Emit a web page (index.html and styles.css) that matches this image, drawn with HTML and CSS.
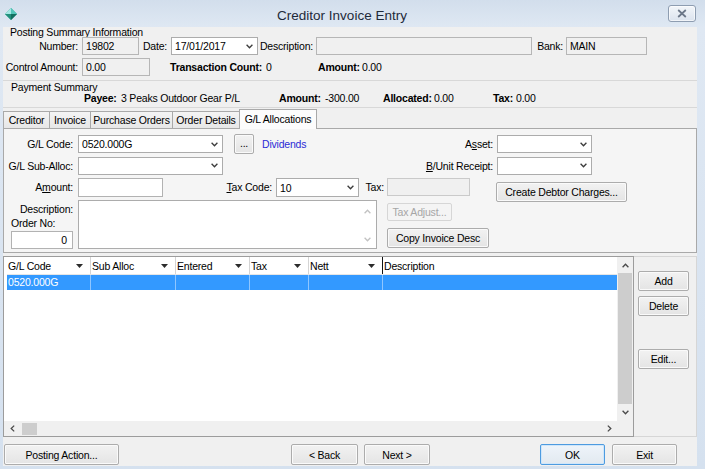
FILE: index.html
```html
<!DOCTYPE html>
<html>
<head>
<meta charset="utf-8">
<title>Creditor Invoice Entry</title>
<link rel="stylesheet" href="styles.css">
</head>
<body>
<svg class="defs" xmlns="http://www.w3.org/2000/svg">
  <symbol id="chev-down" viewBox="0 0 7 5"><path d="M0.6 0.8 L3.5 3.8 L6.4 0.8" fill="none" stroke="currentColor" stroke-width="1.3"/></symbol>
  <symbol id="chev-up" viewBox="0 0 7 5"><path d="M0.6 4.2 L3.5 1.2 L6.4 4.2" fill="none" stroke="currentColor" stroke-width="1.3"/></symbol>
  <symbol id="chev-left" viewBox="0 0 5 7"><path d="M4.2 0.6 L1.2 3.5 L4.2 6.4" fill="none" stroke="currentColor" stroke-width="1.3"/></symbol>
  <symbol id="chev-right" viewBox="0 0 5 7"><path d="M0.8 0.6 L3.8 3.5 L0.8 6.4" fill="none" stroke="currentColor" stroke-width="1.3"/></symbol>
  <symbol id="tri" viewBox="0 0 7 4"><polygon points="0,0 7,0 3.5,4" fill="currentColor"/></symbol>
</svg>
<div class="window">
  <div class="titlebar">
    <svg class="app-icon" viewBox="0 0 12 12">
      <polygon points="6,0 12,6 6,12 0,6" fill="#2aa58f"/>
      <polygon points="6,0 0,6 6,6" fill="#a6e8e4"/>
      <polygon points="6,0 12,6 6,6" fill="#52c6b9"/>
      <polygon points="0,6 6,12 6,6" fill="#23917d"/>
      <polygon points="12,6 6,12 6,6" fill="#137060"/>
    </svg>
    <div class="title">Creditor Invoice Entry</div>
    <div class="close-btn">
      <svg width="10" height="9" viewBox="0 0 10 9"><path d="M1.2 1 L8.8 8 M8.8 1 L1.2 8" stroke="#6b7788" stroke-width="1.7"/></svg>
    </div>
  </div>
  <div class="frame">
    <div class="client">
      <div class="posting">
        <div class="group-title">Posting Summary Information</div>
        <div class="row">
          <span class="lbl l-number">Number:</span>
          <span class="field ro f-number">19802</span>
          <span class="lbl l-date">Date:</span>
          <span class="combo f-date">17/01/2017<svg class="chev"><use href="#chev-down"/></svg></span>
          <span class="lbl l-desc">Description:</span>
          <span class="field ro f-desc"></span>
          <span class="lbl l-bank">Bank:</span>
          <span class="field ro f-bank">MAIN</span>
        </div>
        <div class="row row2">
          <span class="lbl l-number">Control Amount:</span>
          <span class="field ro f-control">0.00</span>
          <span class="b s-txcount">Transaction Count:</span>
          <span class="s-txval">0</span>
          <span class="b s-amt">Amount:</span>
          <span class="s-amtval">0.00</span>
        </div>
      </div>
      <div class="payment">
        <div class="group-title">Payment Summary</div>
        <div class="payrow">
          <span class="b p-payee">Payee:</span>
          <span class="p-payeeval">3 Peaks Outdoor Gear P/L</span>
          <span class="b p-amt">Amount:</span>
          <span class="p-amtval">-300.00</span>
          <span class="b p-alloc">Allocated:</span>
          <span class="p-allocval">0.00</span>
          <span class="b p-tax">Tax:</span>
          <span class="p-taxval">0.00</span>
        </div>
      </div>
      <div class="tabs">
        <div class="tab t-creditor">Creditor</div>
        <div class="tab t-invoice">Invoice</div>
        <div class="tab t-po">Purchase Orders</div>
        <div class="tab t-od">Order Details</div>
        <div class="tab tab-active t-gl">G/L Allocations</div>
      </div>
      <div class="panel">
        <div class="prow prA">
          <span class="plbl">G/L Code:</span>
          <span class="combo w145">0520.000G<svg class="chev"><use href="#chev-down"/></svg></span>
          <span class="btn btn-dots">...</span>
          <span class="dividends">Dividends</span>
          <span class="lbl l-asset">A<u>s</u>set:</span>
          <span class="combo w95"><svg class="chev"><use href="#chev-down"/></svg></span>
        </div>
        <div class="prow prB">
          <span class="plbl">G/L Sub-Alloc:</span>
          <span class="combo w145"><svg class="chev"><use href="#chev-down"/></svg></span>
          <span class="lbl l-bunit"><u>B</u>/Unit Receipt:</span>
          <span class="combo w95"><svg class="chev"><use href="#chev-down"/></svg></span>
        </div>
        <div class="prow prC">
          <span class="plbl tall">A<u>m</u>ount:</span>
          <span class="field f-amount"></span>
          <span class="lbl tall l-taxcode"><u>T</u>ax Code:</span>
          <span class="combo f-taxcode">10<svg class="chev"><use href="#chev-down"/></svg></span>
          <span class="lbl tall l-tax">Tax:</span>
          <span class="field dis f-tax"></span>
          <span class="btn btn-debtor">Create Debtor Charges...</span>
        </div>
        <div class="prow prD">
          <div class="dcol">
            <div class="desc-lbl">Description:</div>
            <div class="ord-lbl">Order No:</div>
            <div class="field ord-input">0</div>
          </div>
          <div class="textarea">
            <div class="tscroll">
              <svg class="tchev"><use href="#chev-up"/></svg>
              <svg class="tchev"><use href="#chev-down"/></svg>
            </div>
          </div>
          <div class="bcol">
            <span class="btn disabled btn-taxadj">Tax Adjust...</span>
            <span class="btn btn-copy">Copy Invoice Desc</span>
          </div>
        </div>
      </div>
      <div class="gridwrap">
        <div class="grid">
          <div class="gtable">
            <div class="ghead">
              <div class="gh c1"><span>G/L Code</span><svg class="tri"><use href="#tri"/></svg></div>
              <div class="gh c2"><span>Sub Alloc</span><svg class="tri"><use href="#tri"/></svg></div>
              <div class="gh c3"><span>Entered</span><svg class="tri"><use href="#tri"/></svg></div>
              <div class="gh c4"><span>Tax</span><svg class="tri"><use href="#tri"/></svg></div>
              <div class="gh c5 last-sep"><span>Nett</span><svg class="tri"><use href="#tri"/></svg></div>
              <div class="gh c6"><span>Description</span></div>
            </div>
            <div class="grow">
              <div class="gc c1">0520.000G</div>
              <div class="gc c2"></div>
              <div class="gc c3"></div>
              <div class="gc c4"></div>
              <div class="gc c5"></div>
              <div class="gc c6"></div>
            </div>
          </div>
          <div class="vscroll">
            <div class="sb-btn sb-up"><svg class="schev"><use href="#chev-up"/></svg></div>
            <div class="vthumb"></div>
            <div class="sb-btn sb-down"><svg class="schev"><use href="#chev-down"/></svg></div>
          </div>
          <div class="hscroll">
            <div class="hb-btn"><svg class="hchev"><use href="#chev-left"/></svg></div>
            <div class="hthumb"></div>
            <div class="hb-btn hb-right"><svg class="hchev"><use href="#chev-right"/></svg></div>
          </div>
          <div class="corner"></div>
        </div>
        <div class="side">
          <span class="btn sbtn b-add">Add</span>
          <span class="btn sbtn b-del">Delete</span>
          <span class="btn sbtn b-edit">Edit...</span>
        </div>
      </div>
      <div class="bottom">
        <span class="btn bb b-post">Posting Action...</span>
        <span class="btn bb b-back">&lt; Back</span>
        <span class="btn bb b-next">Next &gt;</span>
        <span class="btn bb b-ok">OK</span>
        <span class="btn bb b-exit">Exit</span>
      </div>
    </div>
  </div>
</div>
</body>
</html>
```
FILE: styles.css
```css
* { box-sizing: border-box; margin: 0; padding: 0; }
html, body { width: 705px; height: 469px; overflow: hidden; }
body {
  font-family: "Liberation Sans", Arial, sans-serif;
  font-size: 10.5px;
  letter-spacing: -0.2px;
  color: #000;
  background: #d9e4f1;
}
.defs { position: absolute; width: 0; height: 0; overflow: hidden; }
.b { font-weight: bold; }

.window {
  width: 705px; height: 469px;
  display: flex; flex-direction: column;
  background: linear-gradient(180deg, #d2deec 0, #dfe8f3 27px, #d5e1ef 100%);
}
.titlebar { height: 27px; flex: none; display: flex; align-items: center; }
.app-icon { width: 12px; height: 12px; margin: 1px 5px 0 5px; flex: none; }
.title {
  flex: 1; text-align: center; font-size: 13.5px; letter-spacing: 0;
  color: #1e2a3a; padding-top: 3px;
}
.close-btn {
  width: 28px; height: 17px; margin: 0 9px 0 6px; flex: none;
  border: 1px solid #8e9db1; border-radius: 3px;
  background: linear-gradient(180deg, #f3f6fa, #dbe3ee);
  display: flex; align-items: center; justify-content: center;
  box-shadow: inset 0 0 0 1px rgba(255,255,255,0.6);
}

.frame { flex: 1; padding: 0 8px 3px 3px; display: flex; }
.client {
  width: 694px; height: 439px; background: #f0f0f0;
  display: flex; flex-direction: column;
}

/* summary groups */
.posting { height: 54px; flex: none; padding-bottom: 4px; border-bottom: 1px solid #d8d8d8; }
.group-title { height: 10px; line-height: 10px; padding-left: 7px; white-space: nowrap; }
.row { display: flex; align-items: center; height: 18px; }
.row2 { margin-top: 3px; }
.lbl { flex: none; white-space: nowrap; text-align: right; padding-right: 4px; }
.field {
  flex: none; height: 18px; line-height: 16px; padding-left: 3px;
  border: 1px solid #b2b2b2; background: #fff; white-space: nowrap; overflow: hidden;
}
.field.ro { background: #f0f0f0; border-color: #b6b6b6; }
.field.dis { background: #f0f0f0; border-color: #cacaca; }
.l-number { width: 79px; }
.f-number { width: 57px; }
.l-date { width: 32px; }
.f-date { width: 87px; }
.l-desc { width: 58px; padding-right: 3px; }
.f-desc { width: 216px; }
.l-bank { width: 34px; padding-right: 3px; }
.f-bank { width: 81px; }
.f-control { width: 68px; }
.s-txcount { width: 96px; margin-left: 20px; white-space: nowrap; }
.s-txval { width: 52px; }
.s-amt { width: 44px; white-space: nowrap; }

.combo {
  flex: none; height: 18px; border: 1px solid #acacac; background: #fff;
  display: flex; align-items: center; justify-content: space-between;
  padding: 0 4px 0 3px; white-space: nowrap; color: #000;
}
.chev { width: 7px; height: 5px; color: #3c3c3c; margin-left: auto; flex: none; }

.payment { height: 27px; flex: none; border-bottom: 1px solid #d8d8d8; }
.payment .group-title { padding-left: 8px; margin-top: 1px; }
.payrow { display: flex; height: 11px; line-height: 11px; margin-top: 1px; padding-left: 81px; white-space: nowrap; }
.p-payee { width: 37px; }
.p-payeeval { width: 158px; }
.p-amt { width: 46px; }
.p-amtval { width: 58px; }
.p-alloc { width: 51px; }
.p-allocval { width: 59px; }
.p-tax { width: 23px; }

/* tabs */
.tabs { display: flex; align-items: flex-end; height: 20px; margin-top: 1px; flex: none; }
.tab {
  height: 18px; line-height: 17px; text-align: center; white-space: nowrap;
  border: 1px solid #a9a9a9; border-bottom: none; margin-right: -1px;
  background: linear-gradient(180deg, #f4f4f4, #e6e6e6);
}
.t-creditor { width: 47px; }
.t-invoice { width: 42px; }
.t-po { width: 83px; }
.t-od { width: 68px; }
.tab-active {
  position: relative; z-index: 2; width: 78px; height: 20px; line-height: 18px;
  background: #fcfcfc;
}

.panel {
  height: 125px; flex: none; margin-top: -1px;
  border: 1px solid #a9a9a9; background: #f5f5f5;
  padding: 5px 0 3px 0; display: flex; flex-direction: column;
}
.prow { display: flex; align-items: center; flex: none; }
.prA { height: 20px; }
.prB { height: 19px; margin-top: 2px; }
.prC { height: 19px; margin-top: 3px; align-items: flex-start; }
.prD { height: 49px; margin-top: 3px; align-items: flex-start; }
.plbl { flex: none; width: 74px; padding-right: 5px; text-align: right; white-space: nowrap; }
.tall { line-height: 19px; }
.w145 { width: 145px; }
.w95 { width: 95px; }
.dividends { width: 178px; margin-left: 8px; color: #2b2bd6; flex: none; }
.l-asset { width: 57px; }
.l-bunit { width: 274px; }
.f-amount { width: 85px; height: 19px; }
.l-taxcode { width: 113px; }
.f-taxcode { width: 83px; height: 19px; }
.l-tax { width: 28px; padding-right: 3px; }
.f-tax { width: 83px; height: 18px; }

.btn {
  flex: none; display: flex; align-items: center; justify-content: center;
  border: 1px solid #acacac; border-radius: 2px; white-space: nowrap;
  background: linear-gradient(180deg, #f2f2f2, #e4e4e4);
  box-shadow: inset 0 0 0 1px #fafafa;
  color: #000;
}
.btn.disabled { color: #a6a6a6; border-color: #d6d6d6; background: #f4f4f4; box-shadow: none; }
.btn-dots { width: 20px; height: 20px; margin-left: 11px; padding-bottom: 3px; }
.btn-debtor { width: 131px; height: 20px; margin-left: 26px; margin-top: 4px; }

.dcol { width: 74px; flex: none; }
.desc-lbl { text-align: right; padding-right: 5px; line-height: 12px; margin-top: 3px; }
.ord-lbl { padding-left: 7px; line-height: 12px; margin-top: 2px; }
.ord-input { margin-left: 7px; width: 62px; height: 18px; margin-top: 2px; text-align: right; padding-right: 5px; }
.textarea {
  width: 299px; height: 49px; flex: none; background: #fff; border: 1px solid #acacac;
  display: flex; justify-content: flex-end;
}
.tscroll {
  width: 17px; display: flex; flex-direction: column; align-items: center;
  justify-content: space-between; padding: 8px 0 6px;
}
.tchev { width: 7px; height: 5px; color: #c2c2c2; }
.bcol { margin-left: 10px; display: flex; flex-direction: column; align-items: flex-start; }
.btn-taxadj { width: 65px; height: 18px; margin-top: 3px; }
.btn-copy { width: 102px; height: 20px; margin-top: 7px; }

/* grid */
.gridwrap { display: flex; height: 181px; margin-top: 3px; flex: none; }
.grid {
  width: 631px; flex: none; border: 1px solid #9c9c9c; background: #fff;
  display: grid; grid-template-columns: 1fr 16px; grid-template-rows: 1fr 15px;
}
.gtable { padding-left: 3px; overflow: hidden; }
.ghead { display: flex; height: 18px; border-bottom: 1px solid #e6e6e6; }
.gh {
  display: flex; align-items: center; justify-content: space-between;
  padding: 0 7px 0 1px; border-right: 1px solid #d4d4d4; flex: none; white-space: nowrap;
}
.gh.last-sep { border-right-color: #111; }
.gh.c6 { border-right: none; }
.tri { width: 7px; height: 4px; color: #2c2c2c; flex: none; }
.c1 { width: 84px; }
.c2 { width: 85px; }
.c3 { width: 74px; }
.c4 { width: 59px; }
.c5 { width: 74px; }
.c6 { width: 234px; }
.grow { display: flex; height: 15px; background: #3399ff; color: #fff; }
.gc { flex: none; border-right: 1px solid #8fc6ff; line-height: 15px; padding-left: 1px; white-space: nowrap; }
.gc.c6 { border-right: none; }

.vscroll { grid-column: 2; grid-row: 1; background: #f0f0f0; display: flex; flex-direction: column; }
.sb-btn { display: flex; align-items: center; justify-content: center; flex: none; }
.sb-up { height: 16px; }
.sb-down { height: 17px; }
.schev { width: 7px; height: 5px; color: #4a4a4a; }
.vthumb { flex: 1; background: #cdcdcd; margin: 0 1px 0 1px; }
.hscroll { grid-column: 1; grid-row: 2; background: #f0f0f0; display: flex; align-items: center; }
.hb-btn { width: 16px; height: 15px; display: flex; align-items: center; justify-content: center; flex: none; }
.hb-right { margin-left: auto; }
.hchev { width: 5px; height: 7px; color: #4a4a4a; }
.hthumb { width: 15px; height: 12px; background: #cdcdcd; margin-left: 2px; }
.corner { grid-column: 2; grid-row: 2; background: #f0f0f0; }

.side {
  width: 63px; flex: none; border: 1px solid #d6d6d6; border-left: none;
  padding: 14px 0 0 4px; display: flex; flex-direction: column;
}
.sbtn { width: 51px; height: 20px; }
.b-del { margin-top: 5px; }
.b-edit { margin-top: 33px; }

/* bottom bar */
.bottom { height: 29px; flex: none; padding: 7px 0 0 1px; display: flex; }
.bb { height: 21px; }
.b-post { width: 115px; }
.b-back { width: 67px; margin-left: 172px; }
.b-next { width: 66px; margin-left: 6px; }
.b-ok {
  width: 65px; margin-left: 110px; border-color: #4d9be0;
  background: linear-gradient(180deg, #eef4fa, #e2e9f0);
  box-shadow: inset 0 0 0 1px #cfe6fa;
}
.b-exit { width: 65px; margin-left: 7px; }
```
